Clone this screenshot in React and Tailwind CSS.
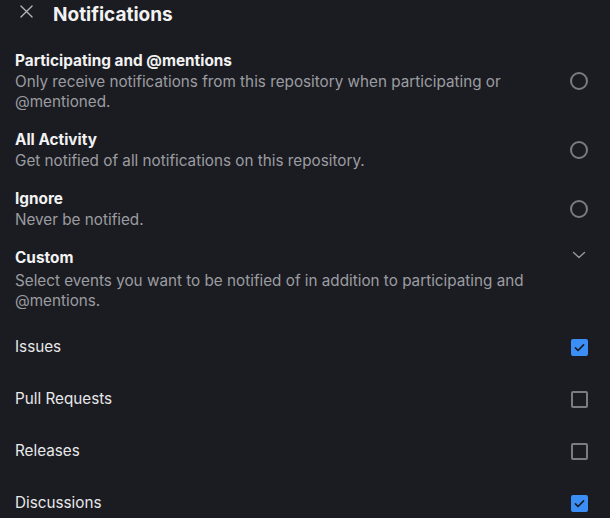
import React from "react";

function Radio() {
  return <div className="w-[18px] h-[18px] rounded-full border-2 border-[#7b7c82] shrink-0" />;
}

function Check({ checked }) {
  if (checked)
    return (
      <div className="w-[17px] h-[17px] rounded-[2px] bg-[#3a8ef6] flex items-center justify-center shrink-0">
        <svg width="13" height="13" viewBox="0 0 16 16" fill="none">
          <path d="M3 8.5l3.2 3.2L13 4.8" stroke="#1b1c21" strokeWidth="2" strokeLinecap="round" strokeLinejoin="round" />
        </svg>
      </div>
    );
  return <div className="w-[17px] h-[17px] rounded-[2px] border-2 border-[#7b7c82] shrink-0" />;
}

const options = [
  { title: "Participating and @mentions", desc: "Only receive notifications from this repository when participating or @mentioned." },
  { title: "All Activity", desc: "Get notified of all notifications on this repository." },
  { title: "Ignore", desc: "Never be notified." },
];

const events = [
  { name: "Issues", checked: true },
  { name: "Pull Requests", checked: false },
  { name: "Releases", checked: false },
  { name: "Discussions", checked: true },
];

export default function App() {
  return (
    <div className="w-[610px] h-[518px] overflow-hidden bg-[#1b1c21] text-[#f2f2f3]" style={{ fontFamily: "Inter, 'Noto Sans', sans-serif" }}>
      <div className="flex items-center h-[31px] pl-[20px]">
        <svg width="13" height="13" viewBox="0 0 14 14" fill="none" className="mt-[-9px]">
          <path d="M1 1l12 12M13 1L1 13" stroke="#b5b6ba" strokeWidth="1.4" strokeLinecap="round" />
        </svg>
        <div className="ml-[20px] text-[19px] leading-[28px] font-bold mt-[-2px]">Notifications</div>
      </div>
      <div className="pt-[19px] pl-[15px] pr-[22px] flex flex-col gap-[17px]">
        {options.map((o) => (
          <div key={o.title} className="flex items-center">
            <div className="flex-1 pr-[40px]">
              <div className="text-[15.35px] leading-[22px] font-bold">{o.title}</div>
              <div className="text-[15.25px] leading-[20px] text-[#9b9ca1]">{o.desc}</div>
            </div>
            <Radio />
          </div>
        ))}
        <div className="flex items-start">
          <div className="flex-1 pr-[40px]">
            <div className="text-[15.35px] leading-[22px] font-bold">Custom</div>
            <div className="text-[15.25px] leading-[20px] text-[#9b9ca1] mt-[2px]">
              Select events you want to be notified of in addition to participating and @mentions.
            </div>
          </div>
          <svg width="16" height="16" viewBox="0 0 16 16" fill="none" className="mr-[1px]">
            <path d="M2.5 5.5l5.5 5 5.5-5" stroke="#9b9ca1" strokeWidth="1.3" strokeLinecap="round" strokeLinejoin="round" />
          </svg>
        </div>
      </div>
      <div className="pl-[15px] pr-[22px] mt-[10px] flex flex-col">
        {events.map((e) => (
          <div key={e.name} className="flex items-center justify-between h-[52px]">
            <span className="text-[15.25px] text-[#e8e8ea]">{e.name}</span>
            <Check checked={e.checked} />
          </div>
        ))}
      </div>
    </div>
  );
}
